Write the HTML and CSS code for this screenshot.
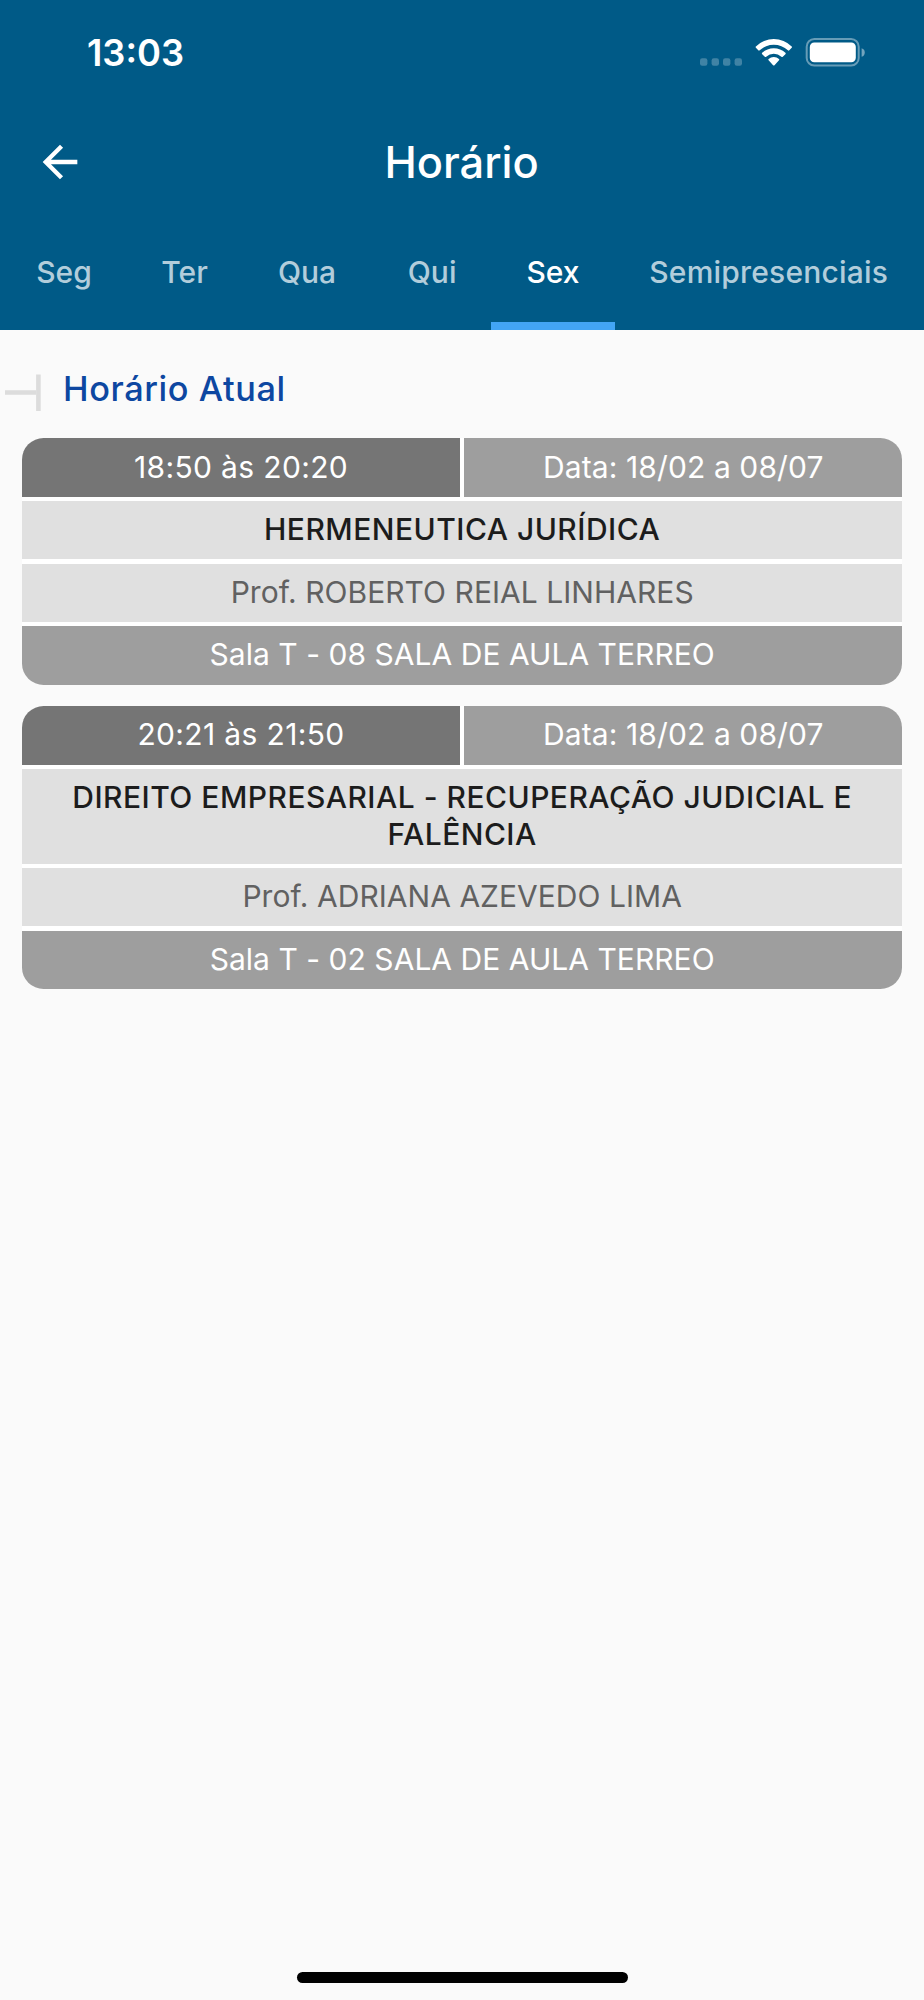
FILE: index.html
```html
<!DOCTYPE html>
<html lang="pt-BR">
<head>
<meta charset="utf-8">
<title>Horário</title>
<link rel="stylesheet" href="styles.css">
</head>
<body>
<header class="header">
  <div class="status">
    <span class="clock">13:03</span>
    <svg class="status-icons" width="170" height="32" viewBox="0 0 170 32">
      <g fill="#fff" fill-opacity=".25">
        <rect x="2" y="22.300" width="7.400" height="7.400" rx="2.200"/>
        <rect x="13.600" y="22.300" width="7.400" height="7.400" rx="2.200"/>
        <rect x="25" y="22.300" width="7.400" height="7.400" rx="2.200"/>
        <rect x="36.600" y="22.300" width="7.400" height="7.400" rx="2.200"/>
      </g>
      <g fill="#fff" transform="translate(0 1.300)">
        <path d="M57.900 10.500a1 1 0 0 1 0-1.400A25.500 25.500 0 0 1 93.700 9.100a1 1 0 0 1 0 1.400L91.300 13a1 1 0 0 1-1.400 0A20.500 20.500 0 0 0 61.700 13a1 1 0 0 1-1.400 0Z"/>
        <path d="M64.200 16.900a1 1 0 0 1 0-1.400A17 17 0 0 1 87.400 15.500a1 1 0 0 1 0 1.400L84.800 19.400a1 1 0 0 1-1.400 0A11.500 11.500 0 0 0 68.200 19.400a1 1 0 0 1-1.400 0Z"/>
        <path d="M70.600 22.900a.9.9 0 0 1 0-1.300A7.900 7.900 0 0 1 81 21.600a.9.9 0 0 1 0 1.300L76.500 27.900a1 1 0 0 1-1.400 0Z"/>
      </g>
      <rect x="108.700" y="3.100" width="52" height="26.400" rx="7.600" fill="none" stroke="#fff" stroke-opacity=".4" stroke-width="2"/>
      <rect x="111.800" y="6.500" width="46" height="19.700" rx="4.500" fill="#fff"/>
      <path d="M163.600 12.200a4.500 4.500 0 0 1 0 8.600Z" fill="#fff" fill-opacity=".45"/>
    </svg>
  </div>
  <div class="appbar">
    <svg class="back" width="52" height="52" viewBox="0 0 24 24"><path fill="#fff" d="M20 11H7.830l5.590-5.590L12 4l-8 8 8 8 1.410-1.410L7.830 13H20v-2z"/></svg>
    <h1 class="title">Horário</h1>
  </div>
  <nav class="tabs">
    <a class="tab seg">Seg</a>
    <a class="tab ter">Ter</a>
    <a class="tab qua">Qua</a>
    <a class="tab qui">Qui</a>
    <a class="tab sex active">Sex</a>
    <a class="tab semi">Semipresenciais</a>
  </nav>
</header>
<main class="content">
  <div class="section">
    <svg class="branch" width="36" height="38" viewBox="0 0 36 38"><path d="M0 18.500H31M33.400 .500V37" fill="none" stroke="#dcdcdc" stroke-width="4.600"/></svg>
    <h2 class="section-title">Horário Atual</h2>
  </div>
  <section class="card">
    <div class="row time">18:50 às 20:20</div>
    <div class="row date">Data: 18/02 a 08/07</div>
    <div class="row subject">HERMENEUTICA JURÍDICA</div>
    <div class="row teacher">Prof. ROBERTO REIAL LINHARES</div>
    <div class="row room">Sala T - 08 SALA DE AULA TERREO</div>
  </section>
  <section class="card">
    <div class="row time">20:21 às 21:50</div>
    <div class="row date">Data: 18/02 a 08/07</div>
    <div class="row subject">DIREITO EMPRESARIAL - RECUPERAÇÃO JUDICIAL E<br>FALÊNCIA</div>
    <div class="row teacher">Prof. ADRIANA AZEVEDO LIMA</div>
    <div class="row room">Sala T - 02 SALA DE AULA TERREO</div>
  </section>
</main>
<div class="home"></div>
</body>
</html>
```

FILE: styles.css
```css
* { box-sizing: border-box; }
body {
  margin: 0;
  height: 2000px;
  display: flex;
  flex-direction: column;
  background: #fafafa;
  font-family: Inter, "Liberation Sans", sans-serif;
  font-size: 30px;
}
h1, h2 { margin: 0; font-weight: 500; }
.header {
  height: 330.400px;
  flex: none;
  display: flex;
  flex-direction: column;
  background: #005a87;
  color: #fff;
}
.status {
  height: 102px;
  padding: 0 55.700px 0 87px;
  display: flex;
  align-items: center;
  justify-content: space-between;
}
.clock { font-size: 36.300px; font-weight: 600; line-height: 44px; padding-top: 4px; }
.status-icons { margin-top: 2px; }
.appbar {
  height: 120px;
  padding: 0 35px 0 34.200px;
  display: grid;
  grid-template-columns: 52px 1fr 52px;
  align-items: center;
}
.title { font-size: 43.400px; line-height: 52px; text-align: center; }
.tabs { flex: 1; display: flex; }
.tab {
  display: flex;
  flex: none;
  align-items: center;
  justify-content: center;
  padding: 8.500px 0 9px;
  font-weight: 500;
  color: #b2cddb;
  border-bottom: 8px solid transparent;
}
.seg { width: 128px; }
.ter { width: 113px; }
.qua { width: 132px; }
.qui { width: 118.300px; }
.sex { width: 123.400px; }
.semi { width: 308px; letter-spacing: .2px; }
.active { color: #fff; border-bottom-color: #42a5f5; }
.content { flex: 1; }
.section { height: 108.100px; padding: 44.100px 0 0 5px; display: flex; gap: 22px; }
.section-title { font-size: 34.300px; font-weight: 550; line-height: 40px; margin-top: -5px; letter-spacing: .6px; color: #0d47a1; }
.card {
  margin: 0 21.700px 21.600px 22px;
  display: grid;
  grid-template-columns: 1fr 1fr;
  gap: 4.200px;
  border-radius: 21.600px;
  overflow: hidden;
  background: #fff;
}
.row {
  padding: 10.200px 0 11.400px;
  line-height: 36.800px;
  text-align: center;
  grid-column: 1 / -1;
  color: #fff;
}
.time { grid-column: 1; background: #757575; letter-spacing: .36px; }
.date { grid-column: 2; background: #9e9e9e; letter-spacing: .1px; }
.subject { background: #e0e0e0; color: #1c1c1c; font-weight: 550; letter-spacing: .48px; }
.teacher { background: #e0e0e0; color: #616161; letter-spacing: .03px; }
.room { background: #9e9e9e; letter-spacing: .03px; }
.home { width: 331px; height: 11px; margin: 0 auto 17.500px; border-radius: 6px; background: #000; }
```
